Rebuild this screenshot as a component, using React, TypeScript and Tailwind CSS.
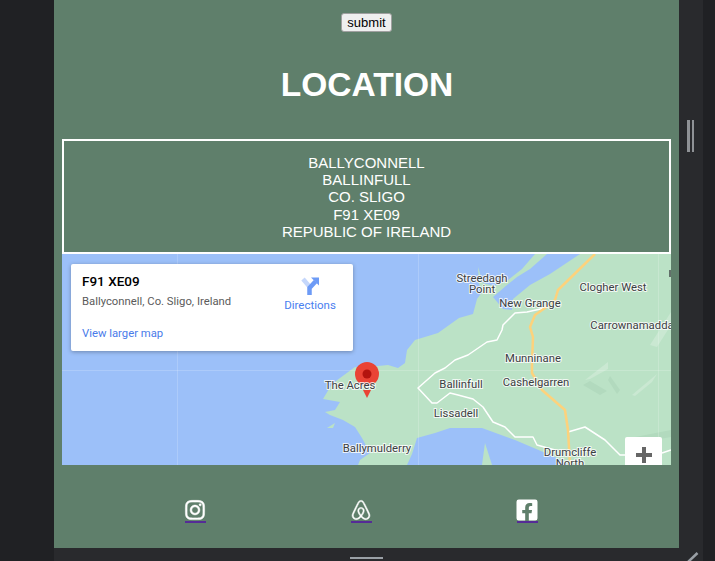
import { FaAirbnb, FaFacebookSquare, FaInstagram } from 'react-icons/fa';

const addressLines = ['BALLYCONNELL', 'BALLINFULL', 'CO. SLIGO', 'F91 XE09', 'REPUBLIC OF IRELAND'];

const labels = [
  { text: 'New Grange', x: 468, y: 53 },
  { text: 'Clogher West', x: 551, y: 37 },
  { text: 'Carrownamadda', x: 570, y: 75 },
  { text: 'Munninane', x: 471, y: 108 },
  { text: 'Ballinfull', x: 399, y: 134 },
  { text: 'Cashelgarren', x: 474, y: 132 },
  { text: 'Lissadell', x: 394, y: 163 },
  { text: 'Ballymulderry', x: 315, y: 198 },
  { text: 'The Acres', x: 288, y: 135 },
];

function MapDrawing() {
  return (
    <svg viewBox="0 0 609 211" className="block w-full h-full">
      <rect width="609" height="211" fill="#9cc0f9" />
      <path
        fill="#bbe2c6"
        d="M473 0 460 15 446 26 432 32 421 29 416 13 417 30 420 38 415 45 411 60 397 64 376 79 353 86 345 96 343 109 336 114 326 111 316 112 293 113 278 124 270 130 261 145 278 148 273 156 263 158 268 161 281 166 293 173 300 184 308 199 298 206 296 211 345 211 350 200 355 184 373 179 388 174 420 174 453 186 493 203 506 211 609 211 609 0Z"
      />
      <path fill="#9cc0f9" d="M485 0 468 15 455 23 445 31 431 43 441 55 450 56 451 45 468 31 488 20 518 0Z" />
      <path fill="#bbe2c6" d="M423 189 420 211 430 211Z" />
      <path fill="#bbe2c6" d="M265 174 273 169 271 174Z" />
      <g fill="#cae8d2">
        <path d="M523 126 546 108 546 115 528 125Z" />
        <path d="M570 141 595 120 590 128 573 142Z" />
        <path d="M588 91 609 58 609 71 595 93Z" />
      </g>
      <g fill="#b2dabe">
        <path d="M521 131 538 141 545 137 528 127Z" />
        <path d="M548 122 558 136 555 140 546 126Z" />
        <path d="M563 185 609 176 609 183 563 191Z" />
      </g>
      <g stroke="#ffffff" strokeOpacity="0.18" strokeWidth="1">
        <path d="M115.500 0V211M356.500 0V211M596.500 0V211M0 116.500H609" />
      </g>
      <rect x="607" y="16" width="2" height="7" fill="#3c4043" fillOpacity="0.7" />
      <g fill="none" stroke="#ffffff" strokeWidth="1.500" strokeLinejoin="round">
        <path d="M483 54 465 58 453 59 441 71 440 76 435 86 425 88 406 101 393 106 383 114 373 119 356 134 370 149 375 149 388 139 396 141 411 145 421 153 431 168 443 173 453 183 471 183 475 191 493 196" />
        <path d="M506 178 523 173 543 186 558 201 570 201M600 199 609 196" />
      </g>
      <path
        fill="none"
        stroke="#fdd27c"
        strokeWidth="2.500"
        strokeLinejoin="round"
        d="M533 0 496 36 493 46 483 54 473 61 468 73 471 83 470 109 470 119 480 136 503 156 506 176 508 211"
      />
      <circle cx="305" cy="120" r="12" fill="#ea4335" />
      <circle cx="305" cy="120" r="4.500" fill="#b3140f" />
      <path d="M301 136h8l-4 8z" fill="#ea4335" />
      <g
        fontFamily="Roboto, sans-serif"
        fontSize="11.300"
        textAnchor="middle"
        fill="#3c4043"
        stroke="#ffffff"
        strokeOpacity="0.8"
        strokeWidth="2"
        style={{ paintOrder: 'stroke' }}
      >
        {labels.map((l) => (
          <text key={l.text} x={l.x} y={l.y}>
            {l.text}
          </text>
        ))}
        <text x="420" y="28">
          Streedagh
          <tspan x="420" dy="11">
            Point
          </tspan>
        </text>
        <text x="508" y="202">
          Drumcliffe
          <tspan x="508" dy="11">
            North
          </tspan>
        </text>
      </g>
    </svg>
  );
}

function DirectionsIcon() {
  return (
    <svg viewBox="0 0 20 20" className="w-[20px] h-[20px]">
      <path d="M3 3 9 10" stroke="#c5d7fb" strokeWidth="4.500" fill="none" />
      <path d="M9.500 19V12L15.500 5.500" stroke="#6d9bf6" strokeWidth="4.500" fill="none" />
      <path d="M11 1.500h8v8z" fill="#6d9bf6" />
    </svg>
  );
}

export default function App() {
  return (
    <div className="relative flex w-[715px] h-[561px] overflow-hidden bg-[#202124] font-['Liberation_Sans',Arial,sans-serif]">
      <div className="w-[54px] shrink-0" />

      <div className="w-[649px] shrink-0 flex flex-col bg-[#292a2d]">
        <div className="flex h-[548px]">
          <main className="w-[625px] shrink-0 bg-[#5f7f6b] flex flex-col">
            <div className="flex justify-center pt-[13px]">
              <button className="w-[51px] h-[19px] text-[13px] leading-none text-black bg-[#efefef] border border-[#a0a0a0] rounded-[3px]">
                submit
              </button>
            </div>

            <h1 className="mt-[33px] h-[40px] text-center text-[33.500px] leading-[40px] font-bold text-white pl-[1px]">LOCATION</h1>

            <div className="ml-[8px] mt-[34px] w-[609px]">
              <div className="h-[115px] border-2 border-white pt-[13px] text-center text-white text-[15px] leading-[17.2px]">
                {addressLines.map((line) => (
                  <div key={line}>{line}</div>
                ))}
              </div>

              <div className="relative h-[211px] overflow-hidden">
                <MapDrawing />

                <div className="absolute left-[9px] top-[10px] w-[282px] h-[87px] bg-white rounded-[2px] shadow-[0_1px_4px_rgba(0,0,0,0.3)] font-['Roboto',sans-serif]">
                  <div className="absolute left-[11px] top-[9px] text-[13.500px] leading-[16px] font-medium text-black">F91 XE09</div>
                  <div className="absolute left-[11px] top-[31px] text-[11.300px] leading-[14px] text-[#5b5b5b]">
                    Ballyconnell, Co. Sligo, Ireland
                  </div>
                  <div className="absolute left-[11px] top-[63px] text-[11.300px] leading-[14px] text-[#4a7bea]">View larger map</div>
                  <div className="absolute right-[13px] top-[12px] w-[60px] flex flex-col items-center">
                    <DirectionsIcon />
                    <span className="mt-[2px] text-[11.500px] leading-[14px] text-[#4a80f0]">Directions</span>
                  </div>
                </div>

                <div className="absolute right-[9px] top-[183px] w-[37px] h-[40px] bg-white rounded-[2px] flex justify-center pt-[9px]">
                  <svg viewBox="0 0 18 18" className="w-[18px] h-[18px]">
                    <path d="M7 1h4v6h6v4h-6v6H7v-6H1V7h6z" fill="#666666" />
                  </svg>
                </div>
              </div>
            </div>

            <footer className="flex justify-center gap-[145px] pr-[11px] pt-[34px]">
              <a href="#" className="block w-[21px] h-[24px] border-b-2 border-[#552b96] text-white">
                <FaInstagram className="w-[22px] h-[22px] -ml-[0.5px] stroke-current stroke-[12]" />
              </a>
              <a href="#" className="block w-[21px] h-[24px] border-b-2 border-[#552b96] text-white">
                <FaAirbnb className="w-[22px] h-[22px] -ml-[0.5px] stroke-current stroke-[12]" />
              </a>
              <a href="#" className="block w-[21px] h-[24px] border-b-2 border-[#552b96] text-white">
                <FaFacebookSquare className="w-[24px] h-[24px] -ml-[1.5px] -mt-[1px]" />
              </a>
            </footer>
          </main>

          <div className="w-[24px] flex justify-center gap-[2px] pt-[120px] pr-[1px]">
            <div className="w-[3px] h-[32px] bg-[#8f9296]" />
            <div className="w-[2px] h-[32px] bg-[#8f9296]" />
          </div>
        </div>

        <div className="relative h-[13px] flex justify-center pr-[24px]">
          <div className="mt-[9px] w-[33px] h-[2px] bg-[#9aa0a6]" />
          <svg viewBox="0 0 14 13" className="absolute right-[2px] top-0 w-[14px] h-[13px]">
            <path d="M1 14 10.500 5" stroke="#9aa0a6" strokeWidth="2.500" fill="none" />
          </svg>
        </div>
      </div>

      <div className="w-[12px] shrink-0" />
    </div>
  );
}
